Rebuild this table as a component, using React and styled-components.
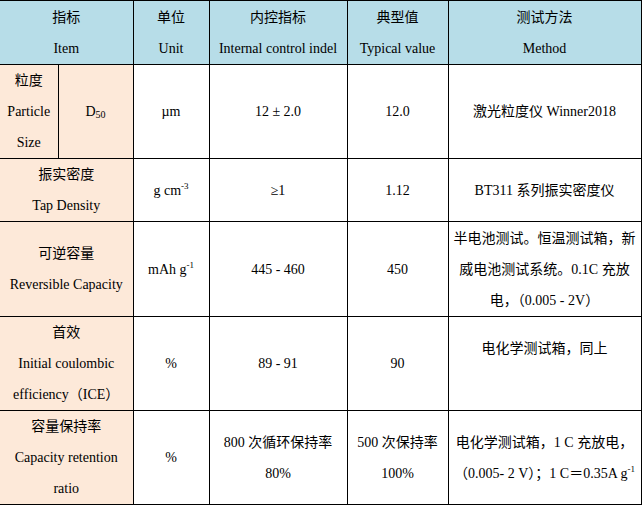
import React from 'react';
import styled, { createGlobalStyle } from 'styled-components';

const GlobalStyle = createGlobalStyle`
  html, body {
    margin: 0;
    padding: 0;
    background: #ffffff;
  }
  body {
    font-family: "Liberation Serif", "Noto Sans CJK SC", serif;
    font-size: 14px;
    color: #000000;
  }
`;

// spec table
const Table = styled.table`
  border-collapse: collapse;
  table-layout: fixed;
  width: 641px;
  border-top: 1px solid #000;
  border-right: 1px solid #000;
  border-bottom: 1px solid #000;
`;

const Row = styled.tr`
  height: ${({ $h }) => $h}px;
`;

const HeadCell = styled.th`
  background: #b7dde8;
  font-weight: normal;
  line-height: 31px;
  padding: 0 2px;
  text-align: center;
  vertical-align: middle;
  border-right: 1px solid #000;
  border-bottom: 1px solid #000;
  white-space: nowrap;
`;

const Cell = styled.td`
  background: ${({ $tone }) => ($tone === 'item' ? '#fde9d9' : '#ffffff')};
  line-height: 31px;
  padding: 0 2px;
  text-align: center;
  vertical-align: middle;
  border-right: 1px solid #000;
  border-bottom: 1px solid #000;
  white-space: nowrap;
  overflow: hidden;
`;

const Sup = styled.sup`
  font-size: 9px;
  line-height: 0;
  vertical-align: 6px;
`;

const Sub = styled.sub`
  font-size: 10px;
  line-height: 0;
  vertical-align: -2px;
`;

const cols = [58, 75, 76, 138, 101, 193];

export default function App() {
  return (
    <>
      <GlobalStyle />
      <Table>
        <colgroup>
          {cols.map((w, i) => (
            <col key={i} style={{ width: w }} />
          ))}
        </colgroup>
        <tbody>
          <Row $h={64}>
            <HeadCell colSpan={2}>指标<br />Item</HeadCell>
            <HeadCell>单位<br />Unit</HeadCell>
            <HeadCell>内控指标<br />Internal control indel</HeadCell>
            <HeadCell>典型值<br />Typical value</HeadCell>
            <HeadCell>测试方法<br />Method</HeadCell>
          </Row>
          <Row $h={94}>
            <Cell $tone="item">粒度<br />Particle<br />Size</Cell>
            <Cell $tone="item">D<Sub>50</Sub></Cell>
            <Cell>µm</Cell>
            <Cell>12 ± 2.0</Cell>
            <Cell>12.0</Cell>
            <Cell>激光粒度仪 Winner2018</Cell>
          </Row>
          <Row $h={63}>
            <Cell $tone="item" colSpan={2}>振实密度<br />Tap Density</Cell>
            <Cell>g cm<Sup>-3</Sup></Cell>
            <Cell>≥1</Cell>
            <Cell>1.12</Cell>
            <Cell>BT311 系列振实密度仪</Cell>
          </Row>
          <Row $h={95}>
            <Cell $tone="item" colSpan={2}>可逆容量<br />Reversible Capacity</Cell>
            <Cell>mAh g<Sup>-1</Sup></Cell>
            <Cell>445 - 460</Cell>
            <Cell>450</Cell>
            <Cell>
              半电池测试。恒温测试箱，新<br />
              威电池测试系统。0.1C 充放<br />
              电，（0.005 - 2V）
            </Cell>
          </Row>
          <Row $h={94}>
            <Cell $tone="item" colSpan={2}>
              首效<br />Initial coulombic<br />efficiency（ICE）
            </Cell>
            <Cell>%</Cell>
            <Cell>89 - 91</Cell>
            <Cell>90</Cell>
            <Cell>电化学测试箱，同上<br />&nbsp;</Cell>
          </Row>
          <Row $h={94}>
            <Cell $tone="item" colSpan={2}>
              容量保持率<br />Capacity retention<br />ratio
            </Cell>
            <Cell>%</Cell>
            <Cell>800 次循环保持率<br />80%</Cell>
            <Cell>500 次保持率<br />100%</Cell>
            <Cell>
              电化学测试箱，1 C 充放电，<br />
              （0.005- 2 V）；1 C＝0.35A g<Sup>-1</Sup>
            </Cell>
          </Row>
        </tbody>
      </Table>
    </>
  );
}
